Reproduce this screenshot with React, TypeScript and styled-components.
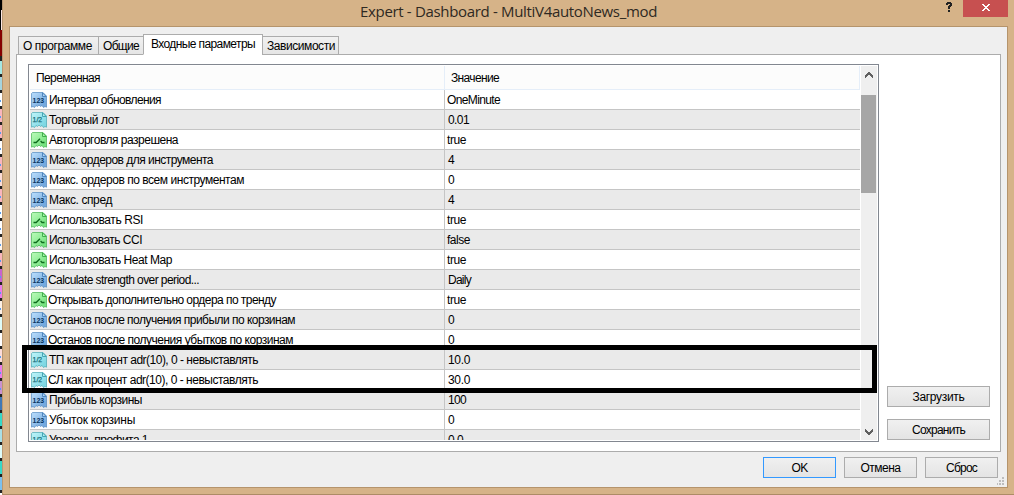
import React, { useLayoutEffect, useRef, useState } from "react";
import styled, { createGlobalStyle, css } from "styled-components";

const GlobalStyle = createGlobalStyle`
  * { box-sizing: border-box; }
  body { margin: 0; overflow: hidden; background: #fff; }
`;

const uiFont = '"Liberation Sans", Arial, sans-serif';

const Screen = styled.div`
  display: flex;
  width: 1014px;
  height: 495px;
  overflow: hidden;
  font: 12px/14px ${uiFont};
  color: #000;
`;

const Strip = styled.div`
  flex: none;
  width: 2px;
  height: 495px;
  display: flex;
  flex-direction: column;
`;

const StripCell = styled.div<{ $color: string; $height?: number; $dot?: string }>`
  flex: none;
  height: ${(p) => p.$height ?? 16}px;
  background: ${(p) => p.$color};
  ${(p) =>
    !p.$height &&
    css`
      border-bottom: 3px solid #222;
    `}
  ${(p) =>
    p.$dot &&
    css`
      background: linear-gradient(${p.$dot}, ${p.$dot}) 0 7px / 1px 2px no-repeat ${p.$color};
    `}
`;

const Dialog = styled.div`
  flex: 1;
  display: flex;
  flex-direction: column;
  height: 495px;
  padding-right: 6px;
  background: #d6b388;
  border-left: 1px solid #b99872;
  border-bottom: 1px solid #ad8c66;
`;

const TitleBar = styled.header`
  flex: none;
  display: flex;
  align-items: flex-start;
  height: 26px;
`;

const Title = styled.h1`
  flex: 1;
  margin: 0;
  padding: 1px 0 0 357px;
  font: 400 15px/20px "Open Sans", "Noto Sans", sans-serif;
  color: #2e2922;
`;

const HelpButton = styled.div`
  width: 28px;
  height: 17px;
  display: flex;
  justify-content: center;
  svg { display: block; margin-top: 2px; }
`;

const CloseButton = styled.div`
  width: 45px;
  height: 17px;
  background: #c75050;
  svg { display: block; margin: 4px 0 0 19px; }
`;

const Client = styled.main`
  height: 462px;
  margin-left: 6px;
  padding: 7px 6px 0;
  background: #efefef;
  border: 1px solid #b5946c;
  display: flex;
  flex-direction: column;
`;

const Tabs = styled.nav`
  position: relative;
  z-index: 1;
  flex: none;
  display: flex;
  align-items: flex-end;
  height: 21px;
  padding-left: 2px;
`;

const Tab = styled.div<{ $width: number; $active?: boolean }>`
  width: ${(p) => p.$width}px;
  height: 19px;
  margin-left: -1px;
  &:first-child { margin-left: 0; }
  padding: 2px 0 0 4px;
  border: 1px solid #acacac;
  background: linear-gradient(#f1f1f1, #e5e5e5);
  ${(p) =>
    p.$active &&
    css`
      height: 21px;
      padding: 2px 0 0 7px;
      background: #fff;
      border-bottom-color: #fff;
    `}
`;

const Pane = styled.section`
  flex: none;
  display: flex;
  align-items: flex-end;
  width: 985px;
  height: 398px;
  margin-top: -1px;
  background: #fff;
  border: 1px solid #acacac;
  padding: 9px 10px 9px 11px;
`;

const List = styled.div`
  flex: none;
  position: relative;
  display: flex;
  width: 851px;
  height: 378px;
  padding: 1px;
  border: 1px solid #828790;
`;

const Table = styled.div`
  width: 830px;
  height: 374px;
  overflow: hidden;
`;

const HeaderRow = styled.div`
  display: flex;
  height: 24px;
  background: #fcfcfc;
  border-bottom: 1px solid #e5eef9;
  line-height: 25px;
`;

const HeaderCell = styled.div<{ $width: number }>`
  width: ${(p) => p.$width}px;
  height: 23px;
  padding-left: 6px;
  border-right: 1px solid #e5eef9;
`;

const Row = styled.div`
  display: flex;
  height: 20px;
  border-bottom: 1px solid #c5c5c5;
  &:nth-child(odd) { background: #eaeaea; }
`;

const NameCell = styled.div<{ $shift?: boolean }>`
  flex: none;
  display: flex;
  align-items: center;
  width: 415px;
  padding-left: 1px;
  padding-top: 1px;
  gap: ${(p) => (p.$shift ? 1 : 2)}px;
  border-right: 1px solid #c5c5c5;
`;

const ValueCell = styled.div<{ $tight: boolean }>`
  padding: 3px 0 0 ${(p) => (p.$tight ? 2 : 3)}px;
`;

const ScrollBar = styled.div`
  display: flex;
  flex-direction: column;
  width: 16px;
  height: 374px;
  margin-left: 1px;
  background: #efefef;
`;

const ScrollArrow = styled.svg<{ $down?: boolean }>`
  display: block;
  flex: none;
  width: 8px;
  height: 6px;
  margin: ${(p) => (p.$down ? "auto 0 5px 4px" : "6px 0 17px 4px")};
  ${(p) => p.$down && "transform: scaleY(-1);"}
`;

const Thumb = styled.div`
  width: 15px;
  height: 98px;
  background: #a6a6a6;
`;

const Highlight = styled.div`
  position: absolute;
  left: -7px;
  top: 280px;
  width: 855px;
  height: 48px;
  border: 5px solid #000;
`;

const SideButtons = styled.aside`
  display: flex;
  flex-direction: column;
  gap: 12px;
  margin: 0 0 2px 8px;
`;

const Button = styled.button<{ $width: number; $primary?: boolean }>`
  width: ${(p) => p.$width}px;
  height: 21px;
  padding: 0;
  font: 12px/18px ${uiFont};
  color: #000;
  text-align: center;
  background: linear-gradient(#f0f0f0, #e4e4e4);
  border: 1px solid ${(p) => (p.$primary ? "#3399ff" : "#acacac")};
`;

const Footer = styled.footer`
  display: flex;
  gap: 8px;
  padding: 5px 0 0 747px;
`;

const Grip = styled.svg`
  position: absolute;
  left: 997px;
  top: 477px;
`;

const Fitted = styled.span`
  display: inline-block;
  white-space: pre;
`;

/* Spreads the letters so that the caption takes the given width. */
function Caption({ text, width }: { text: string; width: number }) {
  const ref = useRef<HTMLSpanElement>(null);
  const [spacing, setSpacing] = useState(0);
  useLayoutEffect(() => {
    const natural = ref.current!.getBoundingClientRect().width;
    setSpacing((width - natural) / text.length);
  }, [text, width]);
  return (
    <Fitted ref={ref} style={{ letterSpacing: spacing }}>
      {text}
    </Fitted>
  );
}

type Kind = "int" | "double" | "bool";

const palette: Record<Kind, { light: string; mid: string; edge: string; ink: string }> = {
  int: { light: "#b0d6f8", mid: "#74a9de", edge: "#4f86bd", ink: "#08345f" },
  double: { light: "#b5f0f6", mid: "#7fd8e4", edge: "#45a5b2", ink: "#186d78" },
  bool: { light: "#b0f7b0", mid: "#76e380", edge: "#3fae4c", ink: "#0c6b1c" },
};

const IconText = styled.text`
  font: 700 7px "Liberation Sans", sans-serif;
`;

const FractionText = styled.text`
  font: 400 8px "Liberation Sans", sans-serif;
`;

const IconSvg = styled.svg`
  display: block;
  flex: none;
  width: 16px;
  height: 16px;
`;

function TypeIcon({ kind }: { kind: Kind }) {
  const c = palette[kind];
  return (
    <IconSvg viewBox="0 0 16 16">
      <defs>
        <linearGradient id={`fill-${kind}`} x1="0" y1="0" x2="1" y2="1">
          <stop offset="0.15" stopColor={c.light} />
          <stop offset="0.8" stopColor={c.mid} />
        </linearGradient>
      </defs>
      <path
        d="M1.5.5H12L15.5 4V15.2L14 14.5L12.5 15.5L11 13.5L9.5 14.5L8 13L6.5 14.5L5 13.5L3.5 15.5L2 14.5L.5 15.2V1.5Z"
        fill={`url(#fill-${kind})`}
        stroke={c.edge}
        strokeWidth="0.9"
        strokeOpacity="0.75"
      />
      <path d="M11.5 .8V4.5H15.2Z" fill={c.light} stroke={c.edge} strokeWidth="1" />
      {kind === "bool" && (
        <path d="M2.5 10.5H5.2L9 6.7M9.6 8.9L11 10.5H13.5" fill="none" stroke={c.ink} strokeWidth="1.3" />
      )}
      {kind === "int" && (
        <IconText x="1.6" y="11" fill={c.ink} textLength="11.5" lengthAdjust="spacingAndGlyphs">123</IconText>
      )}
      {kind === "double" && (
        <FractionText
          x="1.6"
          y="10"
          fill={c.ink}
          stroke={c.ink}
          strokeWidth="0.25"
          textLength="9.5"
          lengthAdjust="spacingAndGlyphs"
        >
          1/2
        </FractionText>
      )}
    </IconSvg>
  );
}

const rows: [Kind, string, number, string, number][] = [
  ["int", "Интервал обновления", 112, "OneMinute", 53],
  ["double", "Торговый лот", 70, "0.01", 21],
  ["bool", "Автоторговля разрешена", 129, "true", 19],
  ["int", "Макс. ордеров для инструмента", 164, "4", 6],
  ["int", "Макс. ордеров по всем инструментам", 195, "0", 6],
  ["int", "Макс. спред", 63, "4", 6],
  ["bool", "Использовать RSI", 94, "true", 19],
  ["bool", "Использовать CCI", 93, "false", 23],
  ["bool", "Использовать Heat Map", 123, "true", 19],
  ["int", "Calculate strength over period...", 151, "Daily", 23],
  ["bool", "Открывать дополнительно ордера по тренду", 228, "true", 19],
  ["int", "Останов после получения прибыли по корзинам", 247, "0", 6],
  ["int", "Останов после получения убытков по корзинам", 245, "0", 6],
  ["double", "ТП как процент adr(10), 0 - невыставлять", 209, "10.0", 22],
  ["double", "СЛ как процент adr(10), 0 - невыставлять", 210, "30.0", 22],
  ["int", "Прибыль корзины", 93, "100", 18],
  ["int", "Убыток корзины", 86, "0", 6],
  ["double", "Уровень профита 1", 99, "0.0", 15],
];

const stripColors = [
  "#a5e8e4", "#a6d4de", "#ffffff", "#f9b6bd", "#f9b6bd", "#ffffff", "#f9b6bd", "#fbdcd6",
  "#f9b6bd", "#ffffff", "#ffffff", "#fff4ea", "#f9b6bd", "#c763ce", "#ea7de8", "#fdf0e6",
  "#defbf8", "#ffffff", "#fcdcd8", "#ea7de8", "#c992d0", "#3f78b6", "#36d8c8", "#a9dfe6",
  "#defbf8", "#36d8c8", "#7cc0ee",
];

export default function App() {
  return (
    <Screen>
      <GlobalStyle />
      <Strip>
        <StripCell $color="#000" $height={10} />
        <StripCell $color="linear-gradient(90deg, #000 50%, #fbe6e0 50%)" $height={20} />
        <StripCell $color="#850000" $height={26} />
        <StripCell $color="#222" $height={5} />
        {stripColors.map((color, i) => (
          <StripCell key={i} $color={color} $dot={i > 1 && i < 21 && i !== 16 && i !== 17 ? "#5a9ce8" : undefined} />
        ))}
      </Strip>
      <Dialog>
        <TitleBar>
          <Title>
            <Caption text="Expert - Dashboard - MultiV4autoNews_mod" width={297} />
          </Title>
          <HelpButton>
            <svg width="7" height="10" shapeRendering="crispEdges">
              <path d="M1 0H5V1H6V4H5V5H4V7H2V4H3V3H4V2H2V3H0V1H1ZM2 8H4V10H2Z" fill="#222" />
            </svg>
          </HelpButton>
          <CloseButton>
            <svg width="8" height="7" shapeRendering="crispEdges">
              <path d="M0 0H2V1H3V2H5V1H6V0H8V1H7V2H6V3H5V4H6V5H7V6H8V7H6V6H5V5H3V6H2V7H0V6H1V5H2V4H3V3H2V2H1V1H0Z" fill="#fff" />
            </svg>
          </CloseButton>
        </TitleBar>
        <Client>
          <Tabs>
            <Tab $width={81}><Caption text="О программе" width={69} /></Tab>
            <Tab $width={46}><Caption text="Общие" width={36} /></Tab>
            <Tab $width={120} $active><Caption text="Входные параметры" width={104} /></Tab>
            <Tab $width={77}><Caption text="Зависимости" width={68} /></Tab>
          </Tabs>
          <Pane>
            <List>
              <Table>
                <HeaderRow>
                  <HeaderCell $width={415}><Caption text="Переменная" width={64} /></HeaderCell>
                  <HeaderCell $width={415}><Caption text="Значение" width={48} /></HeaderCell>
                </HeaderRow>
                {rows.map(([kind, name, nameWidth, value, valueWidth]) => (
                  <Row key={name}>
                    <NameCell $shift={/^[CОС]/.test(name)}>
                      <TypeIcon kind={kind} />
                      <Caption text={name} width={nameWidth} />
                    </NameCell>
                    <ValueCell $tight={/^[Otf]/.test(value)}><Caption text={value} width={valueWidth} /></ValueCell>
                  </Row>
                ))}
              </Table>
              <ScrollBar>
                <ScrollArrow viewBox="0 0 8 6" shapeRendering="crispEdges">
                  <path d="M3 0H5V1H6V2H7V3H8V6H7V5H6V4H5V3H3V4H2V5H1V6H0V3H1V2H2V1H3Z" fill="#606060" />
                </ScrollArrow>
                <Thumb />
                <ScrollArrow $down viewBox="0 0 8 6" shapeRendering="crispEdges">
                  <path d="M3 0H5V1H6V2H7V3H8V6H7V5H6V4H5V3H3V4H2V5H1V6H0V3H1V2H2V1H3Z" fill="#606060" />
                </ScrollArrow>
              </ScrollBar>
              <Highlight />
            </List>
            <SideButtons>
              <Button $width={103}><Caption text="Загрузить" width={52} /></Button>
              <Button $width={103}><Caption text="Сохранить" width={53} /></Button>
            </SideButtons>
          </Pane>
          <Footer>
            <Button $width={73} $primary><Caption text="OK" width={16} /></Button>
            <Button $width={73}><Caption text="Отмена" width={40} /></Button>
            <Button $width={73}><Caption text="Сброс" width={31} /></Button>
          </Footer>
        </Client>
      </Dialog>
      <Grip width="8" height="8" fill="#bdbdbd" shapeRendering="crispEdges">
        <path d="M5 0h2v2h-2zM2 3h2v2h-2zM5 3h2v2h-2zM0 6h1v2h-1zM2 6h2v2h-2zM5 6h2v2h-2z" />
      </Grip>
    </Screen>
  );
}
